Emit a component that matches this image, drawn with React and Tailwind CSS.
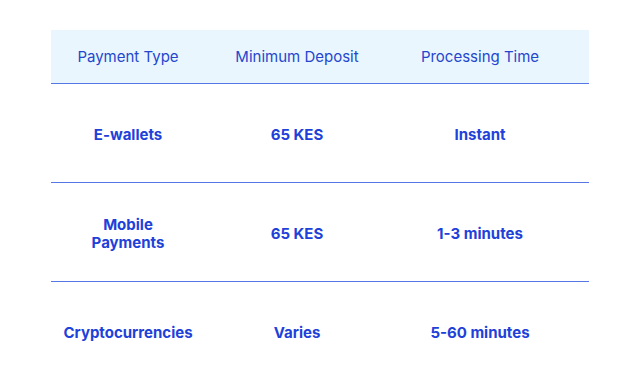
import React from 'react';

const rows = [
  { type: ['E-wallets'], deposit: '65 KES', time: 'Instant' },
  { type: ['Mobile', 'Payments'], deposit: '65 KES', time: '1-3 minutes' },
  { type: ['Cryptocurrencies'], deposit: 'Varies', time: '5-60 minutes' },
];

const App = () => {
  return (
    <div className="w-[640px] h-[382px] bg-white pt-[30px] px-[51px]" style={{ fontFamily: 'Inter, "Open Sans", sans-serif' }}>
      <div className="grid grid-cols-[154px_184px_200px] h-[54px] items-center bg-[#e9f6fd] border-b border-[#5677e6] text-[15px] text-[#2446cf]">
        <div className="text-center pt-[2px]">Payment Type</div>
        <div className="text-center pt-[2px]">Minimum Deposit</div>
        <div className="text-center pt-[2px] pr-[18px]">Processing Time</div>
      </div>
      {rows.map((row, i) => (
        <div
          key={row.deposit + i}
          className={`grid grid-cols-[154px_184px_200px] h-[99px] items-center pt-[3px] text-[15px] font-bold text-[#1d41d9] leading-[18px] ${i < rows.length - 1 ? 'border-b border-[#5677e6]' : ''}`}
        >
          <div className="flex flex-col items-center text-center whitespace-nowrap">
            {row.type.map((t) => (
              <span key={t}>{t}</span>
            ))}
          </div>
          <div className="text-center">{row.deposit}</div>
          <div className="text-center pr-[18px]">{row.time}</div>
        </div>
      ))}
    </div>
  );
};

export default App;
